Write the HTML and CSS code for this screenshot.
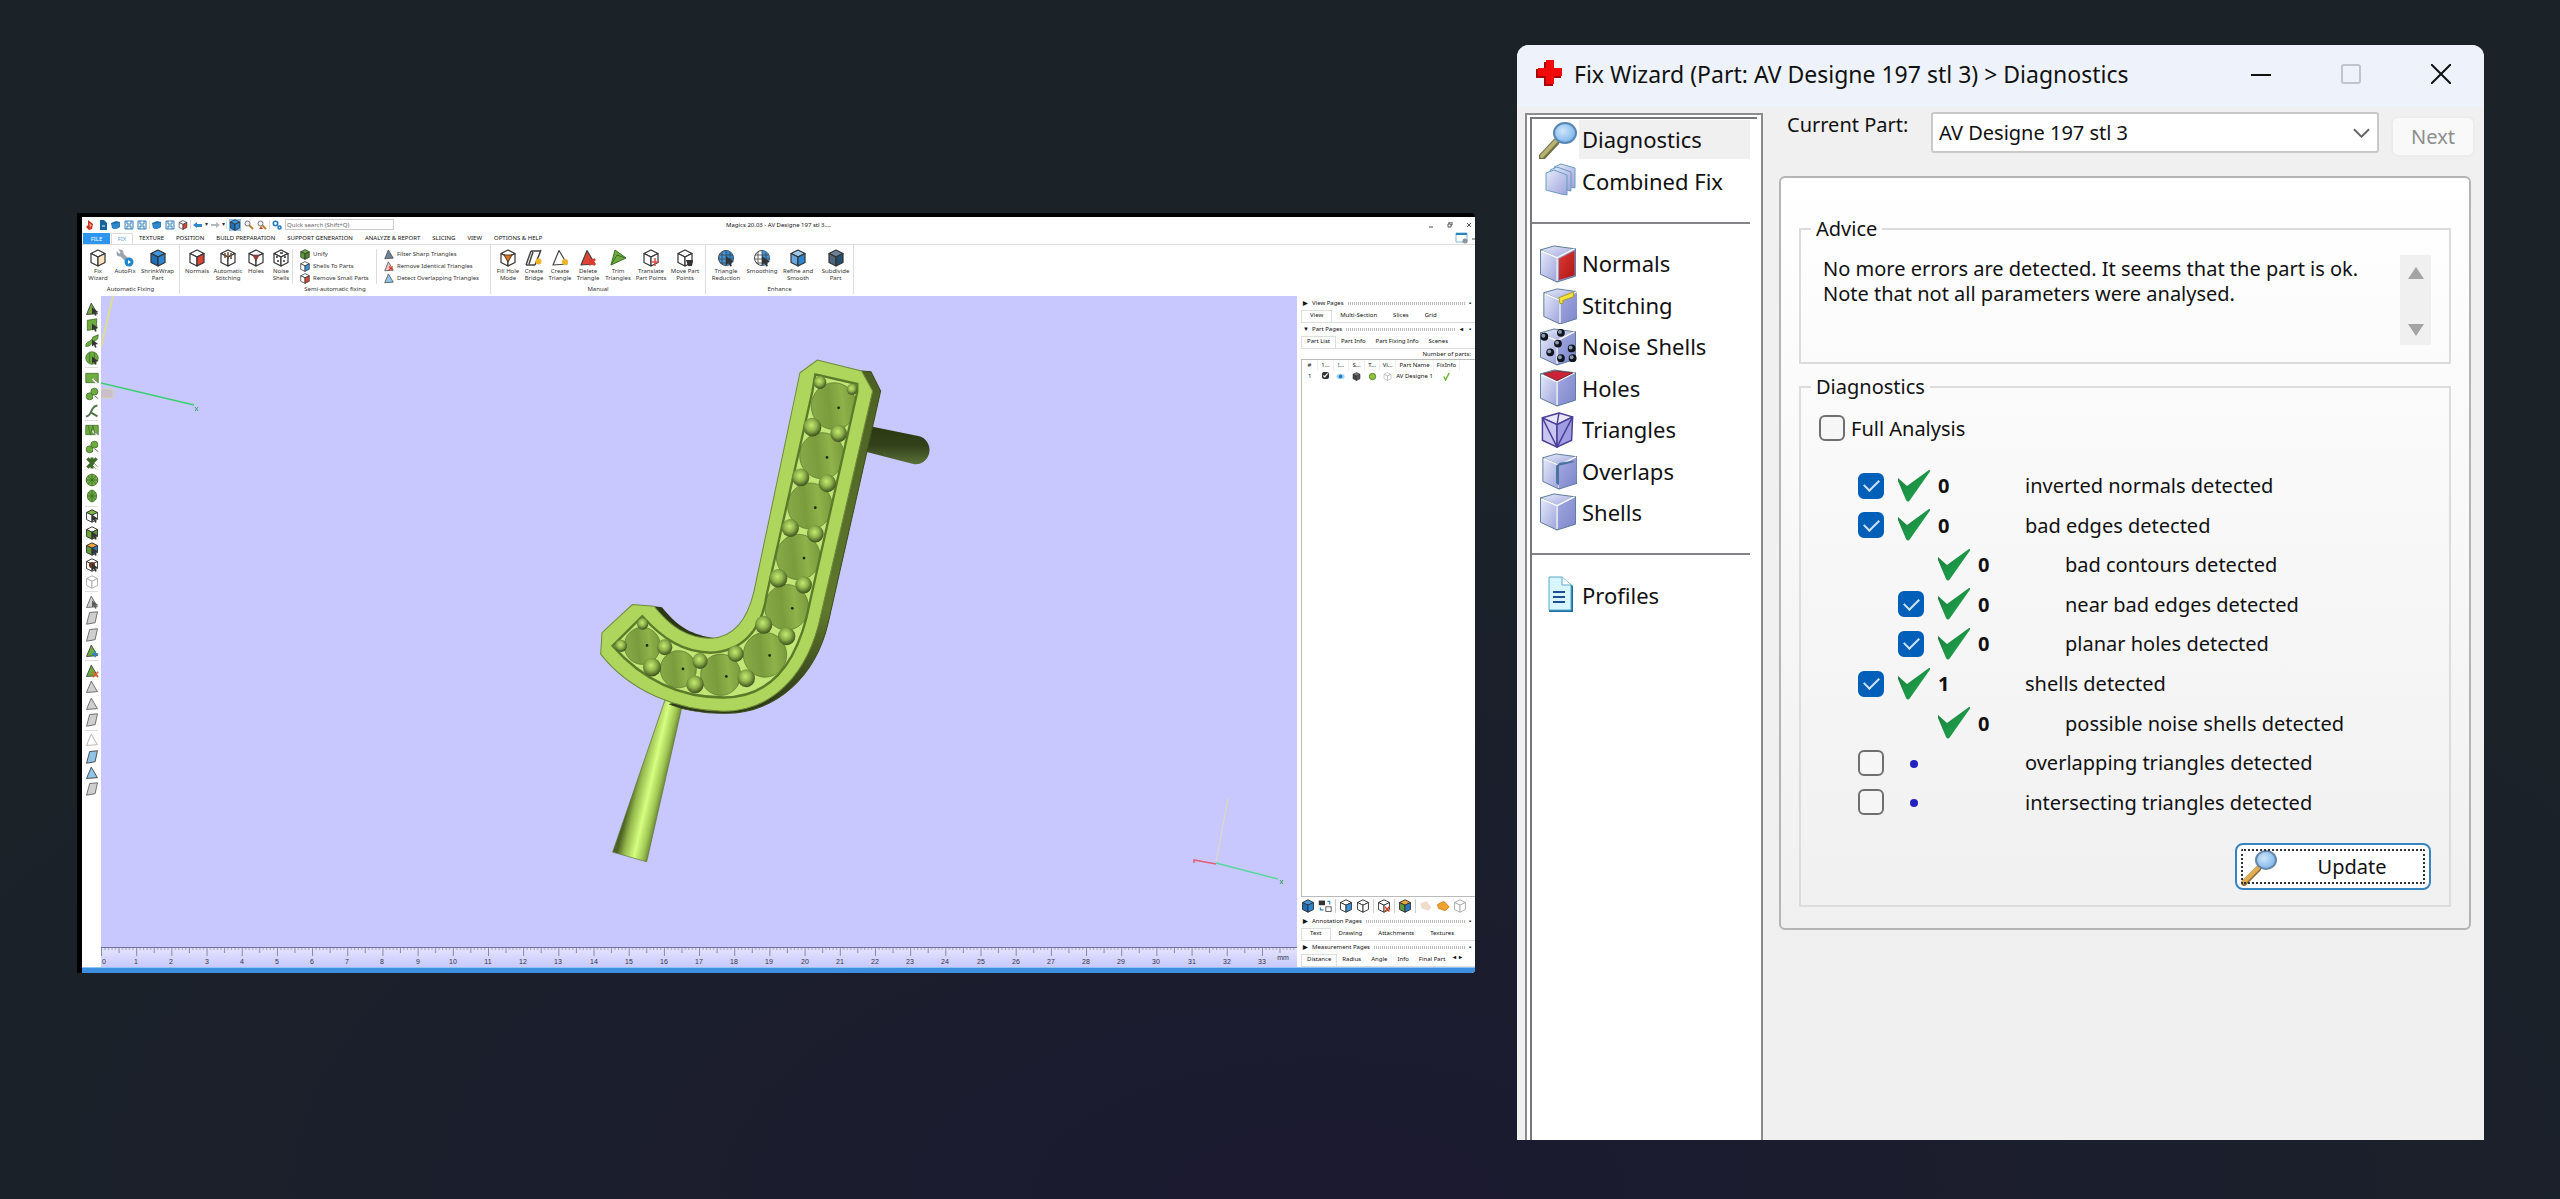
FILE: index.html
```html
<!DOCTYPE html>
<html lang="en">
<head>
<meta charset="utf-8">
<title>Fix Wizard - Diagnostics</title>
<link rel="stylesheet" href="styles.css">
</head>
<body>
<svg class="defs" aria-hidden="true">
  <defs>
    <linearGradient id="lav" x1="0" y1="0" x2="1" y2="1"><stop offset="0" stop-color="#e6ecfa"/><stop offset="1" stop-color="#9da2dc"/></linearGradient>
    <linearGradient id="lav2" x1="0" y1="0" x2="1" y2="1"><stop offset="0" stop-color="#a3a8e0"/><stop offset="1" stop-color="#7d86cc"/></linearGradient>
    <linearGradient id="redg" x1="0" y1="0" x2="1" y2="1"><stop offset="0" stop-color="#dc3c34"/><stop offset="1" stop-color="#b01414"/></linearGradient>
    <radialGradient id="lens" cx=".4" cy=".4" r=".6"><stop offset="0" stop-color="#cfe6fb"/><stop offset="1" stop-color="#7fb6ea"/></radialGradient>
    <linearGradient id="tick" x1="0" y1="0" x2="1" y2="1"><stop offset="0" stop-color="#1f7a3c"/><stop offset=".6" stop-color="#1c9a48"/><stop offset="1" stop-color="#1d7038"/></linearGradient>
    <linearGradient id="cone" x1="0" y1=".1" x2="1" y2="0"><stop offset="0" stop-color="#87a846"/><stop offset=".35" stop-color="#7b9c3d"/><stop offset=".65" stop-color="#8fb24a"/><stop offset="1" stop-color="#76973a"/></linearGradient>
    <radialGradient id="ball" cx=".45" cy=".4" r=".6"><stop offset="0" stop-color="#c4ea70"/><stop offset=".5" stop-color="#8fb34c"/><stop offset="1" stop-color="#3c501b"/></radialGradient>
    <linearGradient id="stick" gradientUnits="userSpaceOnUse" x1="160" y1="1280" x2="262" y2="1304"><stop offset="0" stop-color="#4c6324"/><stop offset=".2" stop-color="#94b84c"/><stop offset=".5" stop-color="#d6ff80"/><stop offset=".75" stop-color="#9fc552"/><stop offset="1" stop-color="#485d22"/></linearGradient>
    <linearGradient id="peg" x1="0" y1="0" x2="0" y2="1"><stop offset="0" stop-color="#2c3a14"/><stop offset=".5" stop-color="#33411a"/><stop offset="1" stop-color="#59713a"/></linearGradient>
    <linearGradient id="side" x1="0" y1="0" x2="0" y2="1"><stop offset="0" stop-color="#4c6023"/><stop offset=".7" stop-color="#5f782d"/><stop offset="1" stop-color="#293414"/></linearGradient>

    <symbol id="cube" viewBox="0 0 18 18"><g stroke="#333" stroke-width="1.2" stroke-linejoin="round"><path class="ft" d="M9 1l7 3.500-7 3.500-7-3.500z"/><path class="fl" d="M2 4.500l7 3.500v9l-7-3.500z"/><path class="fr" d="M16 4.500l-7 3.500v9l7-3.500z"/></g></symbol>
    <symbol id="tri" viewBox="0 0 18 18"><path class="ft" d="M8 1.500l8 13.500-14 1z" stroke="#444" stroke-width="1.200" stroke-linejoin="round"/></symbol>
    <symbol id="quad" viewBox="0 0 18 18"><path class="ft" d="M6 2l10-1-3 14-11 2z" stroke="#444" stroke-width="1.200"/></symbol>
    <symbol id="cursor" viewBox="0 0 18 18"><path d="M9 7l8 6-3.500.5 1.500 3.500-2 .6-1.400-3.500L9 16z" fill="#333"/></symbol>
    <symbol id="globe" viewBox="0 0 18 18"><circle class="ft" cx="9" cy="9" r="7.500" stroke="#444"/><path class="fr" d="M9 1.500a7.500 7.500 0 010 15z"/><path d="M9 1v16M5 3v12M13 3v12M2 6h14M1.500 10h15M3 14h12" stroke="#444" stroke-width=".8" fill="none"/></symbol>
    <symbol id="glass" viewBox="0 0 38 38"><path d="M3 36L17 21" stroke="#6f7345" stroke-width="7" stroke-linecap="round"/><path d="M3 35L17 20" stroke="#b9b174" stroke-width="4" stroke-linecap="round"/><ellipse cx="26" cy="12" rx="11" ry="10" fill="url(#lens)" stroke="#5486b5" stroke-width="2"/></symbol>
    <symbol id="glass-gold" viewBox="0 0 38 38"><path d="M3 35L17 21" stroke="#8e6c34" stroke-width="6" stroke-linecap="round"/><path d="M3 34L17 20" stroke="#e2ad52" stroke-width="4" stroke-linecap="round"/><ellipse cx="25" cy="12" rx="10" ry="9" fill="url(#lens)" stroke="#6686a6" stroke-width="2"/></symbol>
    <symbol id="solid" viewBox="0 0 38 39"><g stroke="#5a7894" stroke-width="1"><path d="M1 5L15 1l22 3-19 9z" fill="url(#lav)"/><path d="M1 5l17 8v25L1 30z" fill="url(#lav)"/><path d="M37 4l-19 9v25l19-6z" fill="url(#lav2)"/></g><path d="M2 6l16 7 18-9M18 13v24" stroke="#fff" stroke-width="1.500" fill="none"/></symbol>
    <symbol id="check" viewBox="0 0 32 32"><path d="M0 8l9 8L31 0c2-1 1 2 0 3L12 30q-2 3-4 0L0 11z" fill="url(#tick)"/></symbol>
    <symbol id="disk" viewBox="0 0 10 10"><path d="M1 1h8v8H1zM3 1v3h4V1M3 9V6h4v3" fill="#eaf4fc" stroke="#3a82b8"/></symbol>
    <symbol id="folder" viewBox="0 0 10 10"><path d="M0 3l5-2 4 1v5l-4 2-4-1z" fill="#1d6fae"/><path d="M1 4l8-1-1 5-6 1z" fill="#3189cb"/></symbol>
    <symbol id="zoomer" viewBox="0 0 10 10"><path d="M5 5l4 4" stroke="#c57f2a" stroke-width="2"/><circle cx="3.500" cy="3.500" r="2.500" fill="#eef" stroke="#777"/></symbol>
    <symbol id="blob" viewBox="0 0 18 18"><g class="ft" stroke="#3d6b2a"><circle cx="6" cy="12" r="4.500"/><circle cx="12" cy="6" r="4.500"/></g><path d="M11 11l5 5" stroke="#eee" stroke-width="3"/><path d="M12 11l5 4" stroke="#555"/></symbol>
    <symbol id="rect" viewBox="0 0 18 18"><path class="ft" d="M1 3h16v12H1z" stroke="#3d6b2a"/><path d="M10 10l6 6" stroke="#eee" stroke-width="3"/><path d="M11 10l6 5" stroke="#555"/></symbol>
  </defs>
</svg>

<main class="desk">
  <section class="app" aria-label="Magics">
    <header class="app-title">
      <div class="qat">
        <svg viewBox="0 0 10 10"><path d="M3 0l5 4-1 5-3 1-3-3 2-2z" fill="#c8321f"/><path d="M4 3l3 2-2 3z" fill="#fff" opacity=".5"/></svg>
        <svg viewBox="0 0 10 10"><path d="M2 0h4l3 3v7H2z" fill="#15649f"/><path d="M4 6h3" stroke="#fff"/></svg>
        <svg><use href="#folder"/></svg>
        <svg><use href="#disk"/></svg>
        <svg><use href="#disk"/></svg>
        <i></i>
        <svg><use href="#folder"/></svg>
        <svg><use href="#disk"/></svg>
        <svg class="red-r"><use href="#cube"/></svg>
        <i></i>
        <svg viewBox="0 0 10 10"><path d="M0 5l4-3v2h5v3H4v1z" fill="#2f86c9"/></svg>
        <b>▾</b>
        <svg viewBox="0 0 10 10"><path d="M10 5L6 2v2H1v2h5v2z" fill="#b4b8bb"/></svg>
        <b>▾</b>
        <i></i>
        <svg class="on blue" viewBox="0 0 18 18"><use href="#cube"/></svg>
        <svg><use href="#zoomer"/></svg>
        <svg viewBox="0 0 10 10"><use href="#zoomer"/><path d="M2 9h4l-2-3z" fill="#d04a2e"/></svg>
        <i></i>
        <svg viewBox="0 0 10 10"><g fill="none" stroke="#2479ba" stroke-width="1.600"><circle cx="3.500" cy="3.500" r="2.200"/><circle cx="7.500" cy="7.500" r="1.500"/></g></svg>
        <input class="search" type="search" placeholder="Quick search (Shift+Q)" aria-label="Quick search">
      </div>
      <h1>Magics 20.03 - AV Designe 197 stl 3....</h1>
      <div class="win-btns">
        <button aria-label="Minimize"><svg viewBox="0 0 6 6"><path d="M1 5h4" stroke="#444"/></svg></button>
        <button aria-label="Restore"><svg viewBox="0 0 6 6"><path d="M1 2h3v3H1zM2 2V0h3v3H4" fill="none" stroke="#555"/></svg></button>
        <button aria-label="Close"><svg viewBox="0 0 6 6"><path d="M1 1l4 4M5 1L1 5" stroke="#555"/></svg></button>
      </div>
    </header>
    <nav class="tabs">
      <a class="file" href="#">FILE</a><a class="cur" href="#">FIX</a><a href="#">TEXTURE</a><a href="#">POSITION</a><a href="#">BUILD PREPARATION</a><a href="#">SUPPORT GENERATION</a><a href="#">ANALYZE &amp; REPORT</a><a href="#">SLICING</a><a href="#">VIEW</a><a href="#">OPTIONS &amp; HELP</a>
      <svg class="tab-tool" viewBox="0 0 20 12"><path d="M1 1h11v9H1z" fill="#fff" stroke="#7ab8dd"/><path d="M1 1h11v2H1z" fill="#2a86b5"/><circle cx="10" cy="9" r="2.500" fill="#8a93a0"/><path d="M17 7h3" stroke="#555"/></svg>
    </nav>
    <div class="ribbon">
      <section class="grp g-auto">
        <div class="btns">
          <button class="rb"><svg class="gold"><use href="#cube"/></svg>Fix<br>Wizard</button>
          <button class="rb"><svg viewBox="0 0 18 18"><path d="M4 4l9 9" stroke="#9aa3ac" stroke-width="4"/><circle cx="4" cy="4" r="3.500" fill="#9aa3ac"/><path d="M1 1l3 3" stroke="#fff" stroke-width="2"/><circle cx="13" cy="13" r="4.500" fill="#1f87cb"/><path d="M12 11l3 2-3 2z" fill="#fff"/></svg>AutoFix</button>
          <button class="rb"><svg class="blue"><use href="#cube"/></svg>ShrinkWrap<br>Part</button>
        </div>
        <h2>Automatic Fixing</h2>
      </section>
      <section class="grp g-semi">
        <div class="btns">
          <button class="rb"><svg class="red-r"><use href="#cube"/></svg>Normals</button>
          <button class="rb"><svg viewBox="0 0 18 18"><use href="#cube"/><path d="M6 4v5M9 3v7M12 4v6" stroke="#6b4a30" stroke-width="1.500"/></svg>Automatic<br>Stitching</button>
          <button class="rb"><svg viewBox="0 0 18 18"><use href="#cube"/><path d="M6 6h6l-3 6z" fill="#b03024" stroke="#444" stroke-width=".6"/></svg>Holes</button>
          <button class="rb"><svg viewBox="0 0 18 18"><use href="#cube"/><path d="M4 8h2M5 12h2M12 8h2M11 12h2M8 4h3" stroke="#333" stroke-width="1.500"/></svg>Noise<br>Shells</button>
          <div class="stack">
            <button><svg class="green"><use href="#cube"/></svg>Unify</button>
            <button><svg class="blue-r"><use href="#cube"/></svg>Shells To Parts</button>
            <button><svg class="red-r"><use href="#cube"/></svg>Remove Small Parts</button>
          </div>
          <div class="stack">
            <button><svg class="slate"><use href="#tri"/></svg>Filter Sharp Triangles</button>
            <button><svg class="pink" viewBox="0 0 18 18"><use href="#tri"/><path d="M9 9l6 6M15 9l-6 6" stroke="#dc3a2e" stroke-width="2"/></svg>Remove Identical Triangles</button>
            <button><svg class="sky"><use href="#tri"/></svg>Detect Overlapping Triangles</button>
          </div>
        </div>
        <h2>Semi-automatic fixing</h2>
      </section>
      <section class="grp g-man">
        <div class="btns">
          <button class="rb"><svg viewBox="0 0 18 18"><use href="#cube"/><path d="M5 6h8l-4 7z" fill="#d4762c" stroke="#5a3414"/></svg>Fill Hole<br>Mode</button>
          <button class="rb"><svg viewBox="0 0 18 18"><path d="M1 16L6 2M10 16l6-15M6 2h10M1 16h9M4 15L8 3" stroke="#444" stroke-width="1.500" fill="none"/><circle cx="13.500" cy="12.500" r="3" fill="#f0b429"/></svg>Create<br>Bridge</button>
          <button class="rb"><svg viewBox="0 0 18 18"><use href="#tri"/><circle cx="14" cy="13" r="3" fill="#f0b429"/></svg>Create<br>Triangle</button>
          <button class="rb"><svg class="red" viewBox="0 0 18 18"><use href="#tri"/><path d="M10 10l6 6M16 10l-6 6" stroke="#e03a2e" stroke-width="2.500"/></svg>Delete<br>Triangle</button>
          <button class="rb"><svg viewBox="0 0 18 18"><path d="M6 1l11 8-15 7z" fill="#6cab3c" stroke="#3d6b2a"/><path d="M2 16L8 6l8 3" fill="none" stroke="#3d6b2a"/></svg>Trim<br>Triangles</button>
          <button class="rb"><svg viewBox="0 0 18 18"><use href="#cube"/><path d="M13 9v8M9 13h8" stroke="#e0524a" stroke-width="1.500"/></svg>Translate<br>Part Points</button>
          <button class="rb"><svg viewBox="0 0 18 18"><use href="#cube"/><path d="M10 11h7l-1 6h-4z" fill="#333"/></svg>Move Part<br>Points</button>
        </div>
        <h2>Manual</h2>
      </section>
      <section class="grp g-enh">
        <div class="btns">
          <button class="rb"><svg class="blue" viewBox="0 0 18 18"><use href="#globe"/><use href="#cursor"/></svg>Triangle<br>Reduction</button>
          <button class="rb"><svg class="blue-r" viewBox="0 0 18 18"><use href="#globe"/><use href="#cursor"/></svg>Smoothing</button>
          <button class="rb"><svg class="refine"><use href="#cube"/></svg>Refine and<br>Smooth</button>
          <button class="rb"><svg class="slate"><use href="#cube"/></svg>Subdivide<br>Part</button>
        </div>
        <h2>Enhance</h2>
      </section>
    </div>

    <div class="work">
      <div class="tools">
        <svg class="green" viewBox="0 0 18 18"><use href="#tri"/><use href="#cursor"/></svg>
        <svg class="green" viewBox="0 0 18 18"><path class="ft" d="M3 3l12-2v13L3 16z" stroke="#3d6b2a"/><use href="#cursor"/></svg>
        <svg class="green" viewBox="0 0 18 18"><path class="ft" d="M1 16c0-8 7-4 9-12l7-3c0 7-3 7-6 9s-3 6-10 6z" stroke="#3d6b2a"/><use href="#cursor"/></svg>
        <svg class="green" viewBox="0 0 18 18"><circle class="ft" cx="9" cy="9" r="8" stroke="#3d6b2a"/><path d="M6 2v13M12 2v13" stroke="#3d6b2a"/><use href="#cursor"/></svg>
        <i></i>
        <svg class="green"><use href="#rect"/></svg>
        <svg class="green"><use href="#blob"/></svg>
        <svg viewBox="0 0 18 18"><path d="M1 16c9 0 5-13 15-14M8 11l8 5" stroke="#57754a" stroke-width="2.500" fill="none"/></svg>
        <i></i>
        <svg class="green" viewBox="0 0 18 18"><use href="#rect"/><path d="M4 3l3 12 3-12 3 12" stroke="#3d6b2a" fill="none"/></svg>
        <svg class="green"><use href="#blob"/></svg>
        <svg class="green" viewBox="0 0 18 18"><path d="M3 3l12 12M15 3L3 15M9 2v14" stroke="#3d6b2a" stroke-width="4"/><path d="M11 11l5 5" stroke="#eee" stroke-width="3"/></svg>
        <svg class="green" viewBox="0 0 18 18"><circle class="ft" cx="9" cy="9" r="7.500" stroke="#3d6b2a"/><path d="M9 1v16M1 9h16M4 4l10 10M14 4L4 14" stroke="#3d6b2a"/></svg>
        <svg class="green" viewBox="0 0 18 18"><ellipse class="ft" cx="9" cy="9" rx="6" ry="7.500" stroke="#3d6b2a"/><path d="M9 1v16M3 9h12M5 4l8 10M13 4L5 14" stroke="#3d6b2a"/></svg>
        <i></i>
        <svg class="green-t" viewBox="0 0 18 18"><use href="#cube"/><use href="#cursor"/></svg>
        <svg class="green-lr" viewBox="0 0 18 18"><use href="#cube"/><use href="#cursor"/></svg>
        <svg class="multi" viewBox="0 0 18 18"><use href="#cube"/><use href="#cursor"/></svg>
        <svg viewBox="0 0 18 18"><use href="#cube"/><circle cx="9" cy="9" r="4" fill="#6b3a1e"/><use href="#cursor"/></svg>
        <svg class="dim"><use href="#cube"/></svg>
        <i></i>
        <svg class="grey" viewBox="0 0 18 18"><use href="#tri"/><use href="#cursor"/></svg>
        <svg class="grey"><use href="#quad"/></svg>
        <svg class="grey"><use href="#quad"/></svg>
        <svg class="green" viewBox="0 0 18 18"><use href="#tri"/><path d="M9 13h8M13 9v8" stroke="#2f86c9" stroke-width="2"/></svg>
        <i></i>
        <svg class="green" viewBox="0 0 18 18"><use href="#tri"/><path d="M10 10l7 7M17 10l-7 7" stroke="#e0602e" stroke-width="2"/></svg>
        <svg class="grey"><use href="#tri"/></svg>
        <svg class="grey"><use href="#tri"/></svg>
        <svg class="grey"><use href="#quad"/></svg>
        <i></i>
        <svg class="dim"><use href="#tri"/></svg>
        <svg class="sky"><use href="#quad"/></svg>
        <svg class="sky"><use href="#tri"/></svg>
        <svg class="grey"><use href="#quad"/></svg>
      </div>
      <div class="view">
        <svg class="scene" viewBox="0 0 1196 651" role="img" aria-label="3D part">
          <path d="M12 0L0 51" stroke="#dcdc96" stroke-width="2"/>
          <path d="M0 93h12v9H0" fill="#cbc0c8" stroke="#d8d0b4"/>
          <path d="M0 87l93 22" stroke="#3ccf72" stroke-width="1.500"/>
          <path d="M94 111l3 4M97 111l-3 4" stroke="#3c9f62"/>
          <path d="M1115 566l12-64" stroke="#dcdcc0"/><path d="M1093 567v-3l22 4" stroke="#e0607a" stroke-width="1.500" fill="none"/>
          <path d="M1115 567l62 16" stroke="#58d8a0" stroke-width="1.500"/><path d="M1179 584l3 4M1182 584l-3 4" stroke="#3c9f62"/>
          <g transform="translate(479 44) scale(.3333 .3444)">
            <clipPath id="well"><path d="M706 100l126 28v22L690 760C655 940 570 1038 430 1038 320 1038 200 1000 98 888l89-86c63 68 123 103 203 106 90-3 155-58 170-168l137-590z"/></clipPath>
            <path d="M878 252l137 27a40 40 0 01-15 81l-140-35z" fill="url(#peg)"/>
            <path d="M255 1045l52 15-107 455-102-28z" fill="url(#stick)" stroke="#5a7236" stroke-width="2"/>
            <path d="M222 773l24 3c50 60 90 80 160 90l-30 20-100-50z" fill="#2c3815"/>
            <path d="M845 90l28 2 29 56-157 672C708 975 590 1086 430 1084c-60 0-120-10-160-26l300-100z" fill="url(#side)" stroke="#3c4d1c" stroke-width="3"/>
            <path d="M660 95l52-37 133 32 33 58-156 652c-36 166-142 278-292 278C290 1075 150 1020 62 912l4-62 91-82 65 5c48 57 98 93 173 93 75-4 110-66 127-136z" fill="#aed65c" stroke="#6d8a3a" stroke-width="3"/>
            <g clip-path="url(#well)">
              <path d="M60 60h850v1020H60z" fill="#c2e676"/>
              <g fill="url(#cone)" stroke="#56702a" stroke-width="2"><circle cx="762" cy="192" r="68"/><circle cx="726" cy="336" r="67"/><circle cx="690" cy="482" r="67"/><circle cx="655" cy="630" r="66"/><circle cx="620" cy="776" r="66"/><circle cx="555" cy="914" r="65"/><circle cx="422" cy="972" r="60"/><circle cx="295" cy="956" r="54"/><circle cx="187" cy="888" r="54"/></g>
            </g>
            <path d="M706 100l126 28v22L690 760C655 940 570 1038 430 1038 320 1038 200 1000 98 888l89-86c63 68 123 103 203 106 90-3 155-58 170-168l137-590z" fill="none" stroke="#5b7a2a" stroke-width="7"/>
            <g fill="url(#ball)"><circle cx="720" cy="123" r="19"/><circle cx="816" cy="143" r="16"/><circle cx="697" cy="253" r="27"/><circle cx="776" cy="271" r="25"/><circle cx="662" cy="399" r="26"/><circle cx="742" cy="416" r="26"/><circle cx="631" cy="546" r="26"/><circle cx="706" cy="563" r="25"/><circle cx="595" cy="692" r="27"/><circle cx="671" cy="711" r="25"/><circle cx="551" cy="827" r="26"/><circle cx="620" cy="860" r="26"/><circle cx="467" cy="911" r="24"/><circle cx="499" cy="982" r="26"/><circle cx="360" cy="932" r="23"/><circle cx="345" cy="1000" r="26"/><circle cx="254" cy="892" r="23"/><circle cx="216" cy="950" r="27"/><circle cx="188" cy="824" r="17"/><circle cx="123" cy="888" r="18"/></g>
            <g fill="#1c260c"><circle cx="776" cy="197" r="4"/><circle cx="741" cy="341" r="4"/><circle cx="706" cy="487" r="4"/><circle cx="672" cy="633" r="4"/><circle cx="637" cy="779" r="4"/><circle cx="569" cy="916" r="4"/><circle cx="439" cy="977" r="4"/><circle cx="309" cy="955" r="4"/><circle cx="201" cy="887" r="4"/></g>
          </g>
        </svg>
        <svg class="ruler" viewBox="0 0 1196 20">
          <defs>
            <linearGradient id="rg" x1="0" y1="0" x2="0" y2="1"><stop offset="0" stop-color="#e6e6ff"/><stop offset="1" stop-color="#c8c8fc"/></linearGradient>
            <pattern id="ticks" width="35.180" height="20" patternUnits="userSpaceOnUse"><path d="M.5 0v9" stroke="#8585a8"/><path d="M18 0v6" stroke="#8585a8"/><path d="M4 0v3M7.500 0v3M11 0v3M14.500 0v3M21.500 0v3M25 0v3M28.500 0v3M32 0v3" stroke="#9a9abf"/></pattern>
          </defs>
          <path d="M0 0h1196v20H0z" fill="url(#rg)"/><path d="M0 0h1196v20H0z" fill="url(#ticks)"/><path d="M0 .5h1196" stroke="#70709a"/>
          <g text-anchor="middle"><text x="3" y="17">0</text><text x="35" y="17">1</text><text x="70" y="17">2</text><text x="106" y="17">3</text><text x="141" y="17">4</text><text x="176" y="17">5</text><text x="211" y="17">6</text><text x="246" y="17">7</text><text x="281" y="17">8</text><text x="317" y="17">9</text><text x="352" y="17">10</text><text x="387" y="17">11</text><text x="422" y="17">12</text><text x="457" y="17">13</text><text x="493" y="17">14</text><text x="528" y="17">15</text><text x="563" y="17">16</text><text x="598" y="17">17</text><text x="633" y="17">18</text><text x="668" y="17">19</text><text x="704" y="17">20</text><text x="739" y="17">21</text><text x="774" y="17">22</text><text x="809" y="17">23</text><text x="844" y="17">24</text><text x="880" y="17">25</text><text x="915" y="17">26</text><text x="950" y="17">27</text><text x="985" y="17">28</text><text x="1020" y="17">29</text><text x="1055" y="17">30</text><text x="1091" y="17">31</text><text x="1126" y="17">32</text><text x="1161" y="17">33</text><text x="1182" y="13">mm</text></g>
        </svg>
      </div>
      <aside class="pages">
        <div class="bar"><b>▶</b>View Pages<i></i><b>▪</b></div>
        <div class="ptabs"><a class="cur" href="#">View</a><a href="#">Multi-Section</a><a href="#">Slices</a><a href="#">Grid</a></div>
        <div class="bar"><b>▼</b>Part Pages<i></i><b>◂</b><b>▪</b></div>
        <div class="ptabs tight"><a class="cur" href="#">Part List</a><a href="#">Part Info</a><a href="#">Part Fixing Info</a><a href="#">Scenes</a></div>
        <p class="count">Number of parts:</p>
        <div class="list">
          <table>
            <thead><tr><th>#</th><th>1...</th><th>!...</th><th>S...</th><th>T...</th><th>Vi...</th><th>Part Name</th><th>FixInfo</th></tr></thead>
            <tbody><tr><td>1</td><td><input type="checkbox" class="mini" checked aria-label="Select part 1"></td><td><svg viewBox="0 0 10 10"><ellipse cx="5" cy="5" rx="4.500" ry="3" fill="#9fd4f5"/><circle cx="5" cy="5" r="2" fill="#1c78bf"/></svg></td><td><svg class="dark"><use href="#cube"/></svg></td><td><svg viewBox="0 0 10 10"><circle cx="5" cy="5" r="3.500" fill="#8fc43c" stroke="#4c7a1c"/></svg></td><td><svg class="dim"><use href="#cube"/></svg></td><td>AV Designe 1</td><td><svg viewBox="0 0 10 10"><path d="M2 5l2 4 4-8" fill="none" stroke="#6cb52d" stroke-width="1.500"/></svg></td></tr></tbody>
          </table>
        </div>
        <div class="icons">
          <svg class="blue"><use href="#cube"/></svg>
          <svg viewBox="0 0 18 18"><path d="M1 2h8v6H1z" fill="#333"/><path d="M10 10h7v6h-7z" fill="#fff" stroke="#333"/><path d="M12 3h3v4M3 11v3h4" stroke="#2f86c9" fill="none" stroke-width="1.500"/></svg>
          <i></i><svg class="blue-r"><use href="#cube"/></svg><svg><use href="#cube"/></svg>
          <i></i><svg viewBox="0 0 18 18"><use href="#cube"/><path d="M10 10l6 6M16 10l-6 6" stroke="#d9442e" stroke-width="2"/></svg>
          <i></i><svg class="multi"><use href="#cube"/></svg>
          <i></i><svg viewBox="0 0 18 18"><path d="M2 5l8-2 6 8-4 4-9-3z" fill="#f0dccb"/></svg><svg viewBox="0 0 18 18"><path d="M2 7l8-4 7 7-5 5-9-3z" fill="#f0a02c" stroke="#c87a1c"/></svg><svg class="dim"><use href="#cube"/></svg>
        </div>
        <div class="bar"><b>▶</b>Annotation Pages<i></i><b>▪</b></div>
        <div class="ptabs"><a class="cur" href="#">Text</a><a href="#">Drawing</a><a href="#">Attachments</a><a href="#">Textures</a></div>
        <div class="bar"><b>▶</b>Measurement Pages<i></i><b>▪</b></div>
        <div class="ptabs tight"><a class="cur" href="#">Distance</a><a href="#">Radius</a><a href="#">Angle</a><a href="#">Info</a><a href="#">Final Part</a><b>◂</b><b>▸</b></div>
      </aside>
    </div>
    <footer class="status"></footer>
  </section>

  <section class="dialog" aria-label="Fix Wizard">
    <header class="dlg-title">
      <svg class="cross" viewBox="0 0 28 28"><path d="M9 2h9v7h8v9h-8v8H9v-8H1V9h8z" fill="#a80808"/><path d="M11 0h8v8h8v8h-8v8h-8v-8H3V8h8z" fill="#f20a0a"/></svg>
      <h1>Fix Wizard (Part: AV Designe 197 stl 3) &gt; Diagnostics</h1>
      <div class="dlg-btns">
        <button aria-label="Minimize"><svg viewBox="0 0 20 20"><path d="M0 11h20" stroke="#111" stroke-width="2"/></svg></button>
        <button aria-label="Maximize" disabled><svg viewBox="0 0 20 20"><rect x="1" y="1" width="18" height="18" rx="2" fill="none" stroke="#c0c4cc" stroke-width="2"/></svg></button>
        <button aria-label="Close"><svg viewBox="0 0 20 20"><path d="M0 0l20 20M20 0L0 20" stroke="#111" stroke-width="2"/></svg></button>
      </div>
    </header>
    <div class="dlg-body">
      <nav class="side"><div class="side-in"><div class="side-list">
        <a class="sel" href="#"><svg><use href="#glass"/></svg><span>Diagnostics</span></a>
        <a href="#"><svg viewBox="0 0 38 38"><g fill="url(#lav)" stroke="#6a9cc0"><path d="M15 5l7-3 14 4v20l-14-3z"/><path d="M11 8l7-3 14 5v19l-14-3z"/><path d="M7 11l8-3 13 5v20l-6-1-15-4z"/></g></svg><span>Combined Fix</span></a>
        <hr>
        <a href="#"><svg viewBox="0 0 38 39"><use href="#solid"/><path d="M36 6l-16 8v22l16-5z" fill="url(#redg)"/></svg><span>Normals</span></a>
        <a href="#"><svg viewBox="0 0 38 39"><svg x="3" y="2" width="33" height="35"><use href="#solid"/></svg><path d="M20 12l15-6v5l-11 4v3h-3z" fill="#f4e23a" stroke="#a8982a"/></svg><span>Stitching</span></a>
        <a href="#"><svg viewBox="0 0 38 39"><use href="#solid"/><g fill="#10141c"><circle cx="5" cy="9" r="4"/><circle cx="22" cy="5" r="4"/><circle cx="19" cy="16" r="4"/><circle cx="33" cy="21" r="4"/><circle cx="11" cy="25" r="4"/><circle cx="22" cy="31" r="4"/><circle cx="34" cy="31" r="4"/></g><g fill="#8a9cb4"><circle cx="4" cy="8" r="2"/><circle cx="21" cy="4" r="2"/><circle cx="18" cy="15" r="2"/><circle cx="32" cy="20" r="2"/><circle cx="10" cy="24" r="2"/><circle cx="21" cy="30" r="2"/><circle cx="33" cy="30" r="2"/></g></svg><span>Noise Shells</span></a>
        <a href="#"><svg viewBox="0 0 38 39"><use href="#solid"/><path d="M4 5l12-3 18 2-16 8z" fill="#cc2236" stroke="#7a2a3c"/></svg><span>Holes</span></a>
        <a href="#"><svg viewBox="0 0 38 39"><g stroke="#4a3e96" stroke-width="1.500" stroke-linejoin="round"><path d="M3 7l17-5 14 4-16 8z" fill="#e9e6fa"/><path d="M3 7l15 7v23L3 30z" fill="#c9c6f2"/><path d="M34 6l-16 8v23l15-7z" fill="#9f9ce2"/><path d="M3 7l15 30L34 6M20 2l-2 12" fill="none"/></g></svg><span>Triangles</span></a>
        <a href="#"><svg viewBox="0 0 38 39"><svg x="2" y="1" width="33" height="34"><use href="#solid"/></svg><path d="M17 14l4-3 14-2v23l-12 4-6-4z" fill="#4a72a0"/><path d="M20 14l17-4v22l-17 5z" fill="url(#lav2)"/></svg><span>Overlaps</span></a>
        <a href="#"><svg><use href="#solid"/></svg><span>Shells</span></a>
        <hr>
        <a href="#"><svg viewBox="0 0 38 38"><path d="M10 2h14l10 8v26H10z" fill="#1c6fa6"/><path d="M10 1h13l9 8v25H10z" fill="#d8f6ff" stroke="#58a8c8"/><path d="M23 1v8h9" fill="#fff" stroke="#58a8c8"/><path d="M14 16h12M14 21h12M14 26h12" stroke="#1c4f96" stroke-width="2"/></svg><span>Profiles</span></a>
      </div></div></nav>
      <div class="content">
        <div class="part-row">
          <label for="part">Current Part:</label>
          <div class="combo"><select id="part"><option>AV Designe 197 stl 3</option></select><svg viewBox="0 0 18 10"><path d="M1 1l8 8 8-8" fill="none" stroke="#666" stroke-width="2"/></svg></div>
          <button class="next" disabled>Next</button>
        </div>
        <div class="panel">
          <fieldset class="advice">
            <legend>Advice</legend>
            <div class="advice-in">
              <p>No more errors are detected. It seems that the part is ok.<br>Note that not all parameters were analysed.</p>
              <div class="scroll"><button aria-label="Scroll up"><svg viewBox="0 0 16 12"><path d="M8 0l8 12H0z" fill="#a3a3a3"/></svg></button><button aria-label="Scroll down"><svg viewBox="0 0 16 12"><path d="M8 12l8-12H0z" fill="#a3a3a3"/></svg></button></div>
            </div>
          </fieldset>
          <fieldset class="diag">
            <legend>Diagnostics</legend>
            <label class="full"><input type="checkbox">Full Analysis</label>
            <div class="rows">
              <label><input type="checkbox" checked><svg><use href="#check"/></svg><b>0</b>inverted normals detected</label>
              <label><input type="checkbox" checked><svg><use href="#check"/></svg><b>0</b>bad edges detected</label>
              <div class="sub"><i></i><svg><use href="#check"/></svg><b>0</b>bad contours detected</div>
              <label class="sub"><input type="checkbox" checked><svg><use href="#check"/></svg><b>0</b>near bad edges detected</label>
              <label class="sub"><input type="checkbox" checked><svg><use href="#check"/></svg><b>0</b>planar holes detected</label>
              <label><input type="checkbox" checked><svg><use href="#check"/></svg><b>1</b>shells detected</label>
              <div class="sub"><i></i><svg><use href="#check"/></svg><b>0</b>possible noise shells detected</div>
              <label><input type="checkbox"><svg viewBox="0 0 32 32"><circle cx="16" cy="17" r="4" fill="#2222c0"/></svg><b></b>overlapping triangles detected</label>
              <label><input type="checkbox"><svg viewBox="0 0 32 32"><circle cx="16" cy="17" r="4" fill="#2222c0"/></svg><b></b>intersecting triangles detected</label>
            </div>
            <button class="update"><svg><use href="#glass-gold"/></svg><span>Update</span></button>
          </fieldset>
        </div>
      </div>
    </div>
  </section>
</main>
</body>
</html>
```
FILE: styles.css
```css
* { box-sizing: border-box; }
body { margin: 0; font-family: "Noto Sans", "Open Sans", sans-serif; color: #111; }
h1, h2, p { margin: 0; font-weight: 400; }
button { font: inherit; color: inherit; border: 0; background: none; padding: 0; }
a { color: inherit; text-decoration: none; }
svg { display: block; flex: none; }
.defs { position: absolute; width: 0; height: 0; }

/* face colours of the shared icon symbols */
.ft { fill: var(--t, #fff); }
.fl { fill: var(--l, #fff); }
.fr { fill: var(--r, #fff); }
.gold { --r: #fbe3c0; }
.blue { --t: #3f97de; --l: #1c6fb8; --r: #2b86d2; }
.blue-r { --r: #3a92dc; }
.refine { --t: #9cc8ec; --l: #6aa8dc; --r: #2b86d2; }
.red-r { --r: #dc4436; }
.red { --t: #dc4436; }
.green { --t: #6fac40; --l: #5f9a38; --r: #4d862c; }
.green-t { --t: #7ab648; }
.green-lr { --l: #6aa83c; --r: #5f9a38; }
.slate { --t: #6b8298; --l: #4f6579; --r: #24506f; }
.pink { --t: #f2c4c0; }
.sky { --t: #8fc4e8; }
.multi { --t: #eda33a; --l: #5f9a38; --r: #2b78c0; }
.grey { --t: #c4c4c4; opacity: .8; }
.dim { opacity: .4; }
.dark { --t: #777; --l: #444; --r: #555; }

.desk {
  min-height: 100vh;
  display: grid;
  grid-template-columns: 1398fr 967fr;
  gap: 42px;
  align-items: center;
  padding: 45px 76px 59px 77px;
  background: radial-gradient(ellipse 60% 60% at 52% 100%, #1b1a31, rgba(27, 26, 49, 0)), #1b2228;
}

/* modelling application */
.app { min-width: 0; border: solid #000; border-width: 4px 0 0 5px; background: #fff; font-size: 6px; line-height: 7px; color: #333; border-radius: 0 4px 4px 0; overflow: hidden; }
.app-title { display: grid; grid-template-columns: 1fr auto 1fr; align-items: center; height: 16px; }
.app-title h1 { font-size: 6px; line-height: 12px; padding: 0 2px; color: #111; }
.qat { display: flex; align-items: center; gap: 3px; padding-left: 3px; }
.qat svg { width: 10px; height: 10px; }
.qat i { width: 1px; height: 9px; margin: 0 -1px; background: #ddd; }
.qat b { font-weight: 400; width: 2px; margin-left: -1px; }
.qat .on { width: 12px; height: 12px; background: #8cc4ee; }
.search { width: 109px; height: 11px; border: 1px solid #ccc; padding: 0 1px; font: inherit; }
.search::placeholder { color: #666; }
.win-btns { display: flex; justify-content: flex-end; gap: 13px; padding-right: 3px; }
.win-btns svg { width: 6px; height: 6px; }
.tabs { display: flex; align-items: center; gap: 12px; height: 12px; border-bottom: 1px solid #ddd; color: #111; }
.tabs a { white-space: nowrap; }
.tabs .file { align-self: stretch; width: 27px; margin-left: 1px; text-align: center; line-height: 12px; background: #2b95f0; color: #fff; }
.tabs .cur { align-self: stretch; width: 22px; margin: 0 -6px 0 -11px; text-align: center; line-height: 11px; border: 1px solid #ddd; border-bottom: 0; color: #5fa3d8; }
.tab-tool { width: 20px; height: 12px; margin-left: auto; }
.ribbon { display: flex; height: 51px; }
.grp { border-right: 1px solid #ddd; display: flex; flex-direction: column; margin-bottom: 2px; }
.grp h2 { font-size: 6px; text-align: center; margin-top: auto; line-height: 10px; }
.btns { display: grid; padding-top: 4px; }
.g-auto .btns { grid-template-columns: 32px 22px 43px; }
.g-semi .btns { grid-template-columns: 34px 28px 28px 22px 84px 114px; }
.g-man .btns { grid-template-columns: 34px 18px 34px 22px 38px 28px 40px; }
.g-enh .btns { grid-template-columns: 40px 32px 40px 35px; }
.rb { display: flex; flex-direction: column; align-items: center; justify-content: flex-start; white-space: nowrap; line-height: 7px; }
.rb svg { width: 18px; height: 18px; margin-bottom: 1px; }
.stack { display: grid; gap: 1px; align-content: start; border-left: 1px solid #ddd; padding-left: 6px; }
.stack button { display: flex; align-items: center; gap: 2px; white-space: nowrap; }
.stack svg { width: 12px; height: 11px; }

.work { display: grid; grid-template-columns: 19px 1fr 178px; }
.tools { display: flex; flex-direction: column; align-items: center; justify-content: space-between; padding: 6px 0 170px; }
.tools svg { width: 14px; height: 14px; }
.tools i { width: 13px; height: 1px; background: #ddd; }
.view { min-width: 0; background: #c8c8fe; }
.scene, .ruler { width: 100%; }
.ruler text { font: 7px "Liberation Sans", sans-serif; fill: #334; }
.pages { display: flex; flex-direction: column; min-width: 0; padding: 1px 0 0 4px; overflow: hidden; color: #111; font-size: 6px; }
.bar { display: flex; align-items: center; gap: 4px; height: 13px; padding: 0 1px 0 2px; white-space: nowrap; }
.bar b { font-size: 6px; width: 5px; }
.bar i { flex: 1; height: 3px; background: repeating-linear-gradient(90deg, #bbb 0 1px, #fff 1px 2px); }
.ptabs { display: flex; height: 13px; border-bottom: 1px solid #ddd; white-space: nowrap; }
.ptabs a { padding: 2px 8px 0; }
.ptabs .cur { border: 1px solid #ddd; border-bottom: 0; padding-top: 1px; }
.ptabs.tight a { padding-left: 5px; padding-right: 5px; }
.tight b { padding-left: 3px; }
.count { text-align: right; padding-right: 4px; line-height: 10px; }
.list { flex: 1; border: 1px solid #bbb; border-right: 0; }
.list table { width: 158px; border-collapse: collapse; table-layout: fixed; }
.list th, .list td { padding: 0; height: 11px; font-weight: 400; border-right: 1px solid #eee; white-space: nowrap; text-align: center; }
.list th:nth-child(7) { width: 38px; }
.list th:nth-child(8) { width: 26px; }
.list td { border: 0; }
.list svg { width: 9px; height: 9px; margin: auto; }
.mini { width: 7px; height: 7px; margin: 0; accent-color: #333; vertical-align: middle; }
.icons { display: flex; align-items: center; gap: 3px; height: 18px; }
.icons svg { width: 14px; height: 14px; }
.icons i { width: 1px; height: 14px; background: #ccc; }
.status { height: 6px; background: #3d8fe0; border-top: 1px solid #8fc4f4; }

/* fix wizard dialog */
.dialog { align-self: stretch; display: flex; flex-direction: column; min-width: 0; background: #f0f0f0; border-radius: 12px 12px 0 0; overflow: hidden; font-size: 20px; line-height: 25px; }
.dlg-title { display: flex; align-items: center; height: 62px; padding: 0 33px 4px 18px; background: #eef3fb; }
.cross { width: 28px; height: 28px; }
.dlg-title h1 { margin-left: 11px; font-size: 23px; line-height: 30px; white-space: nowrap; }
.dlg-btns { display: flex; gap: 70px; margin-left: auto; }
.dlg-btns svg { width: 20px; height: 20px; }
.dlg-body { flex: 1; display: grid; grid-template-columns: 238px 1fr; padding-left: 8px; }
.side { margin-top: 6px; padding: 2px 4px 0 3px; background: #fff; border: 2px solid #8c8c90; border-bottom: 0; }
.side-in { height: 100%; border: solid #77777b; border-width: 2px 0 0 2px; }
.side-list { display: grid; grid-auto-rows: 1fr; height: 497px; padding-right: 7px; font-size: 22px; }
.side-list a { display: flex; align-items: center; padding-left: 7px; }
.side-list svg { width: 38px; height: 38px; }
.side-list span { flex: 1; margin-left: 2px; padding-left: 3px; line-height: 39px; }
.sel span { background: #f0f0f0; }
.side-list hr { align-self: center; width: 100%; margin: 0; border: 0; border-top: 2px solid #848488; }
.content { padding: 5px 13px 0 16px; }
.part-row { display: grid; grid-template-columns: 144px 1fr 84px; margin-right: -4px; padding-left: 8px; }
.combo { display: grid; align-items: center; height: 41px; margin-right: 12px; }
.combo select, .combo svg { grid-area: 1 / 1; }
.combo select { appearance: none; height: 41px; border: 2px solid #c9c9c9; border-radius: 3px; background: #fff; padding: 0 6px; font: inherit; color: inherit; }
.combo svg { width: 17px; height: 10px; justify-self: end; margin-right: 9px; pointer-events: none; }
.next { height: 41px; margin-top: 4px; border: 2px solid #ececec; border-radius: 7px; background: #f9f9f9; color: #8d8d8d; }
.panel { display: grid; gap: 10px; margin-top: 19px; padding: 38px 18px 21px; border: 2px solid #b4b4b4; border-radius: 6px; background: linear-gradient(#fff, #f0f0f0); }
fieldset { min-width: 0; margin: 0; border: 2px solid #dcdcdc; }
legend { margin-left: -8px; padding: 0 5px; line-height: 26px; }
.advice { padding: 13px 18px 17px; }
.advice-in { display: flex; justify-content: space-between; }
.advice p { padding: 1px 0 0 4px; }
.scroll { display: flex; flex-direction: column; justify-content: space-between; align-items: center; width: 31px; height: 90px; padding: 12px 0 9px; background: #f0f0f0; flex: none; }
.scroll button, .scroll svg { width: 16px; height: 12px; }
.diag { padding: 15px 18px; }
.full { display: flex; align-items: center; gap: 6px; height: 26px; }
.dialog input { appearance: none; width: 26px; height: 26px; margin: 0; border: 2px solid #6f6f6f; border-radius: 6px; background: #f6f6f6; display: grid; place-items: center; }
.dialog input:checked { border-color: #005fb8; background: #005fb8; }
.dialog input:checked::after { content: ""; width: 13px; height: 7px; margin-bottom: 4px; border: solid #cfe2f4; border-width: 0 0 2px 2px; transform: rotate(-45deg); }
.rows { display: grid; grid-auto-rows: 1fr; height: 356px; margin: 25px 0 21px 39px; }
.rows > * { display: grid; grid-template-columns: 26px 46px 95px 1fr; align-items: center; }
.rows svg { width: 32px; height: 32px; margin-left: 14px; }
.rows b { margin-left: 8px; }
.rows .sub { padding-left: 40px; }
.update { display: flex; align-items: center; width: 196px; height: 47px; margin-left: auto; padding: 2px 4px; border: 2px solid #3684c0; border-radius: 8px; background: #fff; outline: 2px dotted #333; outline-offset: -8px; }
.update svg { width: 38px; height: 38px; }
.update span { flex: 1; text-align: center; }
```
